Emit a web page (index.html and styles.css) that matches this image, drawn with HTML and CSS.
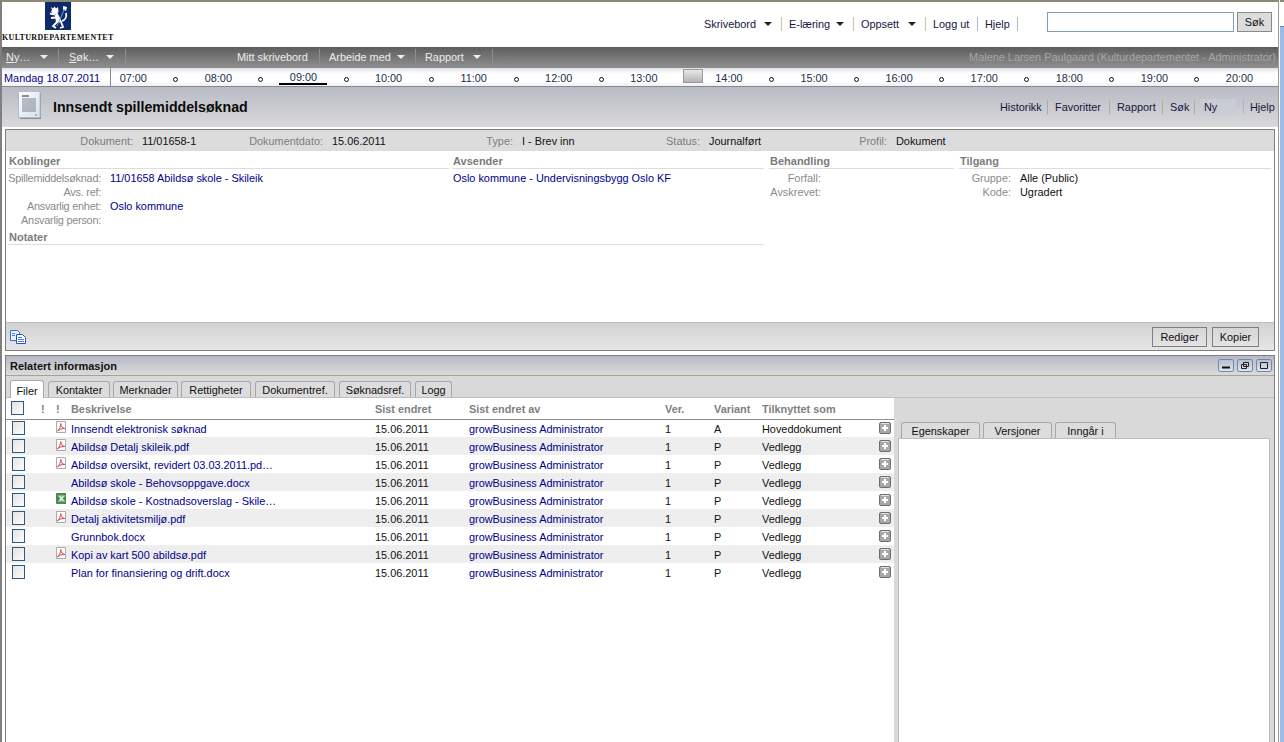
FILE: index.html
```html
<!DOCTYPE html>
<html lang="no">
<head>
<meta charset="utf-8">
<title>Innsendt spillemiddelsøknad</title>
<link rel="stylesheet" href="styles.css">
</head>
<body>
<svg class="defs" width="0" height="0" aria-hidden="true">
  <symbol id="pdf" viewBox="0 0 10 12">
    <path d="M.5.5h9v11h-9z" fill="#fff" stroke="#a9a9b4"/>
    <path d="M1.5 10C3.2 8.2 4.8 5.5 4.8 2.5c0 3 1.6 4.6 4 5C6.300 7.300 3.500 8 1.500 10z" fill="none" stroke="#d8484e" stroke-width="1"/>
  </symbol>
  <symbol id="xls" viewBox="0 0 11 11">
    <path d="M.5.500h10v10H.5z" fill="#3f8f4a" stroke="#5f7f64"/>
    <path d="M2 3h7M2 8h7" stroke="#bfe0bf"/>
    <path d="M3.500 3.500l4 4M7.500 3.500l-4 4" stroke="#fff" stroke-width="1.300"/>
  </symbol>
  <symbol id="plus" viewBox="0 0 12 12">
    <rect x=".5" y=".5" width="11" height="11" rx="1.500" fill="#a8a8a8" stroke="#6e6e6e"/>
    <path d="M2 1.500h8" stroke="#e4e4e4"/>
    <path d="M6 3v6M3 6h6" stroke="#fff" stroke-width="2"/>
  </symbol>
  <linearGradient id="page" x1="0" y1="0" x2="1" y2="1"><stop offset="0" stop-color="#fff"/><stop offset="1" stop-color="#d5deea"/></linearGradient>
</svg>

<div class="app">
  <main class="main">
    <header class="top">
      <div class="brand">
        <div class="crest">
          <svg width="26" height="28" viewBox="0 0 26 28" aria-hidden="true">
            <rect width="26" height="28" fill="#0d2b6b"/>
            <path d="M6 5l2 1.500 1.500-2 1.500 2 2-1.500.5 5-2.500 2-3-.5-2-2 1-1.500z" fill="#fff"/>
            <path d="M12 10l5 10-6 1-1-8z" fill="#fff"/>
            <path d="M10 12.500L5 11.500M11 15.500l-5 .5M12 20l-4 4 3 2M16 20l2 5-3 1M17 19c3-1 5-4 4-8" fill="none" stroke="#fff" stroke-width="1.800"/>
            <path d="M18 4l4 1-1 4-3-1.500z" fill="#fff"/>
            <path d="M19.500 7L12 24" stroke="#7f98c8" stroke-width="1"/>
          </svg>
        </div>
        <div class="dept">KULTURDEPARTEMENTET</div>
      </div>
      <nav class="topmenu">
        <div class="tm tm1">Skrivebord<i class="caret"></i></div>
        <div class="tm tm2">E-læring<i class="caret"></i></div>
        <div class="tm tm2">Oppsett<i class="caret"></i></div>
        <div class="tm tm3">Logg ut</div>
        <div class="tm tm4">Hjelp</div>
      </nav>
      <input class="search" type="text" aria-label="Søk">
      <button class="searchbtn" type="button">Søk</button>
    </header>

    <nav class="navbar">
      <div class="ni n-ny"><span><u>N</u>y…</span><i class="caret light"></i></div>
      <div class="ni n-sok"><span><u>S</u>øk…</span><i class="caret light"></i></div>
      <div class="ni n-gap"></div>
      <div class="ni n-mitt">Mitt skrivebord</div>
      <div class="ni n-arb"><span>Arbeide med</span><i class="caret light"></i></div>
      <div class="ni n-rap"><span>Rapport</span><i class="caret light"></i></div>
      <div class="who">Malene Larsen Paulgaard (Kulturdepartementet - Administrator)</div>
    </nav>

    <div class="timeline">
      <div class="date">Mandag 18.07.2011</div>
      <div class="slots">
        <div class="slot">07:00</div><div class="slot"><i class="dot"></i></div>
        <div class="slot">08:00</div><div class="slot"><i class="dot"></i></div>
        <div class="slot"><span class="now">09:00</span></div><div class="slot"><i class="dot"></i></div>
        <div class="slot">10:00</div><div class="slot"><i class="dot"></i></div>
        <div class="slot">11:00</div><div class="slot"><i class="dot"></i></div>
        <div class="slot">12:00</div><div class="slot"><i class="dot"></i></div>
        <div class="slot">13:00</div><div class="slot"><i class="marker"></i></div>
        <div class="slot">14:00</div><div class="slot"><i class="dot"></i></div>
        <div class="slot">15:00</div><div class="slot"><i class="dot"></i></div>
        <div class="slot">16:00</div><div class="slot"><i class="dot"></i></div>
        <div class="slot">17:00</div><div class="slot"><i class="dot"></i></div>
        <div class="slot">18:00</div><div class="slot"><i class="dot"></i></div>
        <div class="slot">19:00</div><div class="slot"><i class="dot"></i></div>
        <div class="slot">20:00</div>
      </div>
    </div>

    <div class="titlebar">
      <svg class="docicon" width="25" height="29" viewBox="0 0 25 29" aria-hidden="true">
        <path d="M2 2h21v26H2z" fill="#8b8f98"/>
        <path d="M.5.500h21.500v26H.5z" fill="url(#page)" stroke="#b6bcc6"/>
        <path d="M4 5h7" stroke="#222" stroke-width="1"/>
        <path d="M4 8h14M4 10h14M4 12h14M4 14h14M4 16h14M4 18h14M4 20h14" stroke="#7b808a" stroke-width="1"/>
        <path d="M17 24h2" stroke="#889"/>
      </svg>
      <h1>Innsendt spillemiddelsøknad</h1>
      <nav class="actions">
        <span class="act a-his">Historikk</span>
        <span class="act a-fav">Favoritter</span>
        <span class="act a-rap">Rapport</span>
        <span class="act a-sok">Søk</span>
        <span class="act a-ny"><span class="nybox">Ny</span></span>
        <span class="act a-hj">Hjelp</span>
      </nav>
    </div>

    <div class="stack">
      <section class="panel doc">
        <div class="infobar">
          <span class="k">Dokument:</span><span class="v">11/01658-1</span>
          <span class="k">Dokumentdato:</span><span class="v">15.06.2011</span>
          <span class="k">Type:</span><span class="v">I - Brev inn</span>
          <span class="k">Status:</span><span class="v">Journalført</span>
          <span class="k">Profil:</span><span class="v">Dokument</span>
        </div>
        <div class="docbody">
          <div class="leftcol">
            <div class="twocol">
              <div class="sec s-kob">
                <h2>Koblinger</h2>
                <div class="fields f-kob">
                  <span class="fk">Spillemiddelsøknad:</span><span class="fv link">11/01658 Abildsø skole - Skileik</span>
                  <span class="fk">Avs. ref:</span><span class="fv"></span>
                  <span class="fk">Ansvarlig enhet:</span><span class="fv link">Oslo kommune</span>
                  <span class="fk">Ansvarlig person:</span><span class="fv"></span>
                </div>
              </div>
              <div class="sec s-avs">
                <h2>Avsender</h2>
                <div class="plain link">Oslo kommune - Undervisningsbygg Oslo KF</div>
              </div>
            </div>
            <div class="sec s-not"><h2>Notater</h2></div>
          </div>
          <div class="sec s-beh">
            <h2>Behandling</h2>
            <div class="fields f-beh">
              <span class="fk">Forfall:</span><span class="fv"></span>
              <span class="fk">Avskrevet:</span><span class="fv"></span>
            </div>
          </div>
          <div class="sec s-til">
            <h2>Tilgang</h2>
            <div class="fields f-til">
              <span class="fk">Gruppe:</span><span class="fv">Alle (Public)</span>
              <span class="fk">Kode:</span><span class="fv">Ugradert</span>
            </div>
          </div>
        </div>
        <div class="toolbar">
          <svg width="16" height="14" viewBox="0 0 16 14" aria-hidden="true">
            <path d="M.5.500h7l2 2v8h-9z" fill="#eaf1fb" stroke="#3f6fd0"/>
            <path d="M6.500 4.500h6l3 3v6h-9z" fill="#fff" stroke="#2a55b8"/>
            <path d="M8 7.500h4M8 9.500h6M8 11.500h6M2 3.500h3M2 5.500h3" stroke="#4d7fe0"/>
          </svg>
          <button class="btn b-red" type="button">Rediger</button>
          <button class="btn b-kop" type="button">Kopier</button>
        </div>
      </section>

      <section class="panel rel">
        <div class="relhead">
          <h2>Relatert informasjon</h2>
          <div class="winbtns">
            <span class="wb"><svg width="14" height="11" viewBox="0 0 14 11" aria-hidden="true"><path d="M3 7.500h8" stroke="#111" stroke-width="2"/></svg></span>
            <span class="wb"><svg width="14" height="11" viewBox="0 0 14 11" aria-hidden="true"><path d="M5.500 2.500h5v4h-5zM3.500 4.500h5v4h-5z" fill="none" stroke="#222"/></svg></span>
            <span class="wb"><svg width="14" height="11" viewBox="0 0 14 11" aria-hidden="true"><path d="M3.500 2.500h7v6h-7z" fill="none" stroke="#222"/></svg></span>
          </div>
        </div>
        <div class="tabs maintabs">
          <span class="tab on t-fil">Filer</span><span class="tab t-kon">Kontakter</span><span class="tab t-mer">Merknader</span><span class="tab t-ret">Rettigheter</span><span class="tab t-dok">Dokumentref.</span><span class="tab t-sok">Søknadsref.</span><span class="tab t-log">Logg</span>
        </div>
        <div class="split">
          <div class="listwrap">
            <table class="files">
              <colgroup>
                <col class="c-chk"><col class="c-ex"><col class="c-ex"><col class="c-desc"><col class="c-date"><col class="c-by"><col class="c-ver"><col class="c-var"><col class="c-rel"><col class="c-plus">
              </colgroup>
              <thead>
                <tr>
                  <th class="chk"><i class="box"></i></th><th>!</th><th class="ex2">!</th><th>Beskrivelse</th><th>Sist endret</th><th>Sist endret av</th><th>Ver.</th><th>Variant</th><th>Tilknyttet som</th><th></th>
                </tr>
              </thead>
              <tbody>
                <tr><td class="chk"><i class="box"></i></td><td></td><td class="ic"><svg width="10" height="12"><use href="#pdf"/></svg></td><td class="link">Innsendt elektronisk søknad</td><td>15.06.2011</td><td class="link">growBusiness Administrator</td><td>1</td><td>A</td><td>Hoveddokument</td><td class="ic"><svg width="12" height="12"><use href="#plus"/></svg></td></tr>
                <tr><td class="chk"><i class="box"></i></td><td></td><td class="ic"><svg width="10" height="12"><use href="#pdf"/></svg></td><td class="link">Abildsø Detalj skileik.pdf</td><td>15.06.2011</td><td class="link">growBusiness Administrator</td><td>1</td><td>P</td><td>Vedlegg</td><td class="ic"><svg width="12" height="12"><use href="#plus"/></svg></td></tr>
                <tr><td class="chk"><i class="box"></i></td><td></td><td class="ic"><svg width="10" height="12"><use href="#pdf"/></svg></td><td class="link">Abildsø oversikt, revidert 03.03.2011.pd…</td><td>15.06.2011</td><td class="link">growBusiness Administrator</td><td>1</td><td>P</td><td>Vedlegg</td><td class="ic"><svg width="12" height="12"><use href="#plus"/></svg></td></tr>
                <tr><td class="chk"><i class="box"></i></td><td></td><td class="ic"></td><td class="link">Abildsø skole - Behovsoppgave.docx</td><td>15.06.2011</td><td class="link">growBusiness Administrator</td><td>1</td><td>P</td><td>Vedlegg</td><td class="ic"><svg width="12" height="12"><use href="#plus"/></svg></td></tr>
                <tr><td class="chk"><i class="box"></i></td><td></td><td class="ic"><svg width="11" height="11"><use href="#xls"/></svg></td><td class="link">Abildsø skole - Kostnadsoverslag - Skile…</td><td>15.06.2011</td><td class="link">growBusiness Administrator</td><td>1</td><td>P</td><td>Vedlegg</td><td class="ic"><svg width="12" height="12"><use href="#plus"/></svg></td></tr>
                <tr><td class="chk"><i class="box"></i></td><td></td><td class="ic"><svg width="10" height="12"><use href="#pdf"/></svg></td><td class="link">Detalj aktivitetsmiljø.pdf</td><td>15.06.2011</td><td class="link">growBusiness Administrator</td><td>1</td><td>P</td><td>Vedlegg</td><td class="ic"><svg width="12" height="12"><use href="#plus"/></svg></td></tr>
                <tr><td class="chk"><i class="box"></i></td><td></td><td class="ic"></td><td class="link">Grunnbok.docx</td><td>15.06.2011</td><td class="link">growBusiness Administrator</td><td>1</td><td>P</td><td>Vedlegg</td><td class="ic"><svg width="12" height="12"><use href="#plus"/></svg></td></tr>
                <tr><td class="chk"><i class="box"></i></td><td></td><td class="ic"><svg width="10" height="12"><use href="#pdf"/></svg></td><td class="link">Kopi av kart 500 abildsø.pdf</td><td>15.06.2011</td><td class="link">growBusiness Administrator</td><td>1</td><td>P</td><td>Vedlegg</td><td class="ic"><svg width="12" height="12"><use href="#plus"/></svg></td></tr>
                <tr><td class="chk"><i class="box"></i></td><td></td><td class="ic"></td><td class="link">Plan for finansiering og drift.docx</td><td>15.06.2011</td><td class="link">growBusiness Administrator</td><td>1</td><td>P</td><td>Vedlegg</td><td class="ic"><svg width="12" height="12"><use href="#plus"/></svg></td></tr>
              </tbody>
            </table>
          </div>
          <div class="detail">
            <div class="tabs subtabs"><span class="tab t-ege">Egenskaper</span><span class="tab t-ver">Versjoner</span><span class="tab t-inn">Inngår i</span></div>
            <div class="pane"></div>
          </div>
        </div>
      </section>
    </div>
  </main>
  <aside class="edge"><div class="edgetop"></div><div class="edgefill"></div></aside>
</div>
</body>
</html>
```
FILE: styles.css
```css
* { box-sizing: border-box; }
html, body { margin: 0; height: 100%; overflow: hidden; background: #fff; }
body { font: 10.9px/14px "Liberation Sans", Arial, sans-serif; color: #1a1a1a; }
.defs { display: block; height: 0; }
i { display: block; font-style: normal; }

.app { display: flex; width: 1284px; height: 742px; overflow: hidden; }
.main { width: 1279px; flex: none; display: flex; flex-direction: column; border-top: 2px solid #8b8878; border-left: 2px solid #7f7f7f; border-right: 1px solid #9b9b9b; }
.edge { flex: 1; display: flex; flex-direction: column; padding-left: 1px; background: #fdfbf2; }
.edgetop { height: 26px; background: #fff; border-top: 2px solid #8b8878; }
.edgefill { flex: 1; background: #9dbbe3; border-top: 1px solid #5d86bd; }

/* top header */
.top { height: 45px; flex: none; display: flex; align-items: flex-start; background: #fff; }
.brand { width: 702px; flex: none; height: 45px; }
.crest { width: 26px; height: 28px; margin-left: 43px; }
.crest svg { display: block; }
.dept { font: bold 8px/10px "Liberation Serif", serif; letter-spacing: .32px; color: #111; margin-top: 3px; white-space: nowrap; }
.topmenu { display: flex; height: 14px; margin-top: 15px; }
.tm { display: flex; align-items: center; padding-left: 7px; white-space: nowrap; border-right: 1px solid #d0bfa6; color: #161640; }
.tm1 { width: 78px; padding-left: 0; }
.tm2 { width: 72px; }
.tm3 { width: 52px; border-right-color: #a9bcd6; }
.tm4 { width: 40px; border-right-color: #a9bcd6; }
.caret { width: 0; height: 0; margin-left: auto; margin-right: 9px; border: 4px solid transparent; border-top-color: #222; border-bottom: 0; }
.search { width: 187px; height: 20px; margin: 10px 0 0 29px; border: 1px solid #7f9db9; background: #fff; padding: 0; }
.searchbtn { width: 35px; height: 20px; margin: 10px 0 0 3px; padding: 0; border: 1px solid #8a8a8a; background: #dcdcdc; font: inherit; color: #111; }

/* dark nav */
.navbar { height: 21px; flex: none; display: flex; align-items: center; padding-bottom: 2px; background: linear-gradient(#5d5d5d, #7a7a7a 55%, #8e8e8e); color: #ececec; }
.ni { height: 16px; display: flex; align-items: center; white-space: nowrap; border-right: 1px solid #8f8f8f; }
.caret.light { border-top-color: #eee; }
.n-ny { width: 57px; padding-left: 4px; }
.n-ny .caret { margin-right: 10px; }
.n-sok { width: 67px; padding-left: 10px; }
.n-sok .caret { margin-right: 11px; }
.n-gap { width: 101px; border-right: 0; }
.n-mitt { width: 93px; padding-left: 10px; }
.n-arb { width: 96px; padding-left: 9px; }
.n-arb .caret { margin-right: 10px; }
.n-rap { width: 77px; padding-left: 9px; }
.n-rap .caret { margin-right: 11px; }
.who { margin-left: auto; padding-right: 2px; color: #a6a6a6; white-space: nowrap; }

/* timeline */
.timeline { height: 19px; flex: none; display: flex; background: linear-gradient(#dfe2ec, #fff 30%, #fff 70%, #eef0f6); border-bottom: 1px solid #8a8a8a; color: #20304a; }
.date { width: 109px; flex: none; padding: 3px 0 0 2px; color: #00008b; border-right: 1px solid #8a8a8a; white-space: nowrap; }
.slots { display: flex; margin-left: 1px; }
.slot { width: 42.55px; flex: none; display: flex; justify-content: center; align-items: flex-start; padding-top: 3px; white-space: nowrap; }
.now { width: 48px; flex: none; height: 15px; margin-top: -1px; text-align: center; border-bottom: 2px solid #000; color: #20304a; }
.dot { width: 5px; height: 5px; margin-top: 6px; border: 1px solid #111; border-radius: 50%; background: #fff; }
.marker { width: 20px; height: 14px; margin: -2px 0 0 14px; background: linear-gradient(#e8e8e8, #b4b4b4); border: 1px solid #9a9a9a; }

/* title bar */
.titlebar { height: 40px; flex: none; display: flex; align-items: center; padding-left: 16px; background: linear-gradient(#b7bbc4, #d9d9db); }
.docicon { flex: none; margin-top: -3px; }
.titlebar h1 { margin: 0 0 0 10px; font: bold 14.2px/18px "Liberation Sans", Arial, sans-serif; color: #0a0a0a; white-space: nowrap; }
.actions { margin-left: auto; display: flex; height: 14px; padding-right: 3px; color: #16163c; }
.act { padding-left: 7px; padding-right: 6px; border-right: 1px solid #b9a98f; white-space: nowrap; }
.a-his { width: 48px; padding-left: 0; }
.a-fav { width: 62px; }
.a-rap { width: 53px; }
.a-sok { width: 32px; }
.a-ny { width: 49px; padding-left: 5px; border-right-color: #a6b5c9; }
.a-hj { width: 31px; border-right: 0; padding: 0 0 0 6px; }
.nybox { display: block; width: 36px; height: 15px; margin-top: -1px; padding: 1px 0 0 4px; background: #c9cdd3; }

/* panels */
.stack { flex: 1; min-height: 0; display: flex; flex-direction: column; gap: 4px; padding: 2px 3px 0 3px; }
.panel { border: 1px solid #7f7f7f; display: flex; flex-direction: column; }
.doc { height: 222px; flex: none; }
.rel { flex: 1; min-height: 0; border-bottom: 0; background: #d9d9d9; }

.infobar { height: 21px; flex: none; display: grid; grid-template-columns: 127px 60px 130px 70px 120px 70px 117px 70px 117px 1fr; align-items: center; background: #dcdcdc; }
.k { text-align: right; color: #7d7d7d; white-space: nowrap; }
.v { padding-left: 9px; color: #111; white-space: nowrap; }

.docbody { flex: 1; display: flex; gap: 5px; padding: 2px 3px 0 2px; background: #fff; }
.leftcol { width: 756px; flex: none; }
.twocol { display: flex; gap: 3px; }
.sec h2 { margin: 0 0 2px; height: 16px; padding: 1px 0 0 1px; font: bold 11px/14px "Liberation Sans", Arial, sans-serif; color: #7b7b7b; border-bottom: 1px solid #e3dadf; }
.s-kob { width: 441px; flex: none; }
.s-avs { flex: 1; }
.s-not { margin-top: 2px; }
.s-beh { width: 185px; flex: none; }
.s-til { flex: 1; }
.fields { display: grid; grid-auto-rows: 14px; }
.f-kob { grid-template-columns: 93px 1fr; }
.f-beh { grid-template-columns: 52px 1fr; }
.f-til { grid-template-columns: 52px 1fr; }
.fk { justify-self: end; color: #8a8a8a; white-space: nowrap; }
.f-kob .fk { letter-spacing: -.25px; }
.fv { padding-left: 9px; white-space: nowrap; color: #111; }
.plain { padding-left: 1px; }
.link, .fv.link { color: #00008b; }

.toolbar { height: 28px; flex: none; display: flex; align-items: center; padding: 0 15px 0 4px; background: linear-gradient(#d2d2d2, #e6e6e6); border-top: 1px solid #bdbdbd; }
.toolbar svg { margin-right: auto; }
.btn { height: 20px; padding: 0; border: 1px solid #7f7f7f; background: transparent; font: inherit; color: #111; }
.b-red { width: 55px; margin-right: 5px; }
.b-kop { width: 47px; }

/* related panel */
.relhead { height: 20px; flex: none; display: flex; align-items: center; padding: 0 3px 0 4px; background: linear-gradient(#b5b9c4, #dbdbdb); border-bottom: 1px solid #a5a392; }
.relhead h2 { margin: 0; font: bold 11px/14px "Liberation Sans", Arial, sans-serif; color: #111; }
.winbtns { margin-left: auto; display: flex; gap: 5px; }
.wb { width: 14px; height: 11px; display: block; border-radius: 2px; background: linear-gradient(#b9bfcc, #dfe3ea); box-shadow: 0 0 0 1px #6f88b5; }
.wb svg { display: block; }

.tabs { display: flex; align-items: flex-end; }
.tab { height: 16px; padding: 1px 0 0; line-height: 14px; text-align: center; background: #dcdcdc; border: 1px solid #a8a8a8; border-bottom: 0; border-radius: 3px 3px 0 0; color: #111; white-space: nowrap; }
.maintabs { height: 22px; flex: none; gap: 3px; padding-left: 4px; border-bottom: 1px solid #bfbfbf; }
.tab.on { height: 18px; padding: 3px 0 0; background: #fff; margin-bottom: -1px; position: relative; }
.t-fil { width: 34px; }
.t-kon { width: 62px; margin-left: 1px; }
.t-mer { width: 65px; }
.t-ret { width: 70px; }
.t-dok { width: 80px; margin-left: 1px; }
.t-sok { width: 72px; margin-left: 1px; }
.t-log { width: 37px; margin-left: 1px; }
.t-ege { width: 79px; }
.t-ver { width: 69px; }
.t-inn { width: 61px; }

.split { flex: 1; min-height: 0; display: flex; }
.listwrap { width: 888px; flex: none; background: #fff; }
.files { width: 888px; table-layout: fixed; border-collapse: collapse; }
.c-chk { width: 30px; }
.c-ex { width: 15px; }
.c-desc { width: 303px; }
.c-date { width: 94px; }
.c-by { width: 196px; }
.c-ver { width: 49px; }
.c-var { width: 48px; }
.c-rel { width: 118px; }
.c-plus { width: 20px; }
.files th { height: 21px; padding: 1px 0 0 6px; text-align: left; font-weight: bold; color: #808080; border-bottom: 1px solid #8f8f8f; white-space: nowrap; }
.files th:nth-child(2) { padding-left: 5px; }
.files th.ex2 { padding-left: 5px; }
.files th:nth-child(4) { padding-left: 5px; }
.files th.chk { padding: 0 0 0 5px; }
.files td { height: 18px; padding: 1px 0 0 6px; white-space: nowrap; overflow: hidden; color: #111; }
.files td:nth-child(4) { padding-left: 5px; }
.files td.link { color: #00008b; }
.files tbody tr:nth-child(even) { background: #eeeeee; }
.files td.chk { padding: 0 0 0 6px; }
.files td.ic { padding: 0 0 0 5px; line-height: 0; }
.files td.ic svg { margin-top: -3px; display: block; }
.files td.ic:last-child svg { margin-top: -1px; }
.box { width: 13px; height: 14px; border: 1px solid #2c5a80; background: linear-gradient(135deg, #e4e4e4, #fbfbfb); }

.detail { flex: 1; min-width: 0; display: flex; flex-direction: column; padding: 24px 4px 0 4px; }
.subtabs { gap: 3px; padding-left: 3px; height: 16px; flex: none; }
.pane { flex: 1; background: #fff; border: 1px solid #bdbdbd; border-bottom: 0; }
```
